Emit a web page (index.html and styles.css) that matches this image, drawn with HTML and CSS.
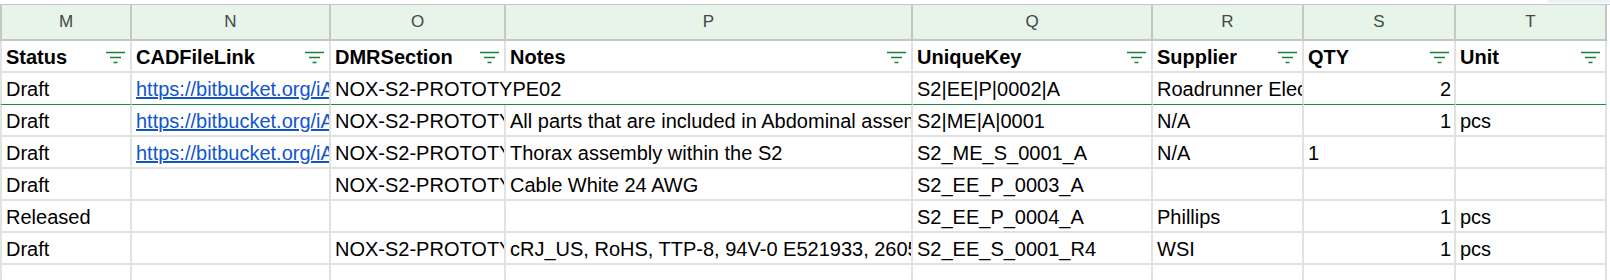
FILE: index.html
```html
<!DOCTYPE html>
<html lang="en">
<head>
<meta charset="utf-8">
<title>Sheet</title>
<link rel="stylesheet" href="styles.css">
</head>
<body>
<div class="sheet">
  <div class="topbar"><div class="pill"></div></div>
  <div class="grid">
    <div class="ch first">M</div>
    <div class="ch">N</div>
    <div class="ch">O</div>
    <div class="ch">P</div>
    <div class="ch">Q</div>
    <div class="ch">R</div>
    <div class="ch">S</div>
    <div class="ch">T</div>
    <div class="edge"></div>

    <div class="c hd first"><span>Status</span><svg class="flt" width="19" height="13" viewBox="0 0 19 13"><path d="M0 1.5h19M4 6.5h11M7.5 11.5h4"/></svg></div>
    <div class="c hd"><span>CADFileLink</span><svg class="flt" width="19" height="13" viewBox="0 0 19 13"><path d="M0 1.5h19M4 6.5h11M7.5 11.5h4"/></svg></div>
    <div class="c hd"><span>DMRSection</span><svg class="flt" width="19" height="13" viewBox="0 0 19 13"><path d="M0 1.5h19M4 6.5h11M7.5 11.5h4"/></svg></div>
    <div class="c hd"><span>Notes</span><svg class="flt" width="19" height="13" viewBox="0 0 19 13"><path d="M0 1.5h19M4 6.5h11M7.5 11.5h4"/></svg></div>
    <div class="c hd"><span>UniqueKey</span><svg class="flt" width="19" height="13" viewBox="0 0 19 13"><path d="M0 1.5h19M4 6.5h11M7.5 11.5h4"/></svg></div>
    <div class="c hd"><span>Supplier</span><svg class="flt" width="19" height="13" viewBox="0 0 19 13"><path d="M0 1.5h19M4 6.5h11M7.5 11.5h4"/></svg></div>
    <div class="c hd"><span>QTY</span><svg class="flt" width="19" height="13" viewBox="0 0 19 13"><path d="M0 1.5h19M4 6.5h11M7.5 11.5h4"/></svg></div>
    <div class="c hd"><span>Unit</span><svg class="flt" width="19" height="13" viewBox="0 0 19 13"><path d="M0 1.5h19M4 6.5h11M7.5 11.5h4"/></svg></div>
    <div class="edge"></div>

    <div class="c gl first">Draft</div>
    <div class="c gl"><a class="lnk" href="#">https://bitbucket.org/iA/</a></div>
    <div class="c gl span2">NOX-S2-PROTOTYPE02</div>
    <div class="c gl">S2|EE|P|0002|A</div>
    <div class="c gl">Roadrunner Electronics</div>
    <div class="c gl num">2</div>
    <div class="c gl"></div>
    <div class="edge"></div>

    <div class="c first">Draft</div>
    <div class="c"><a class="lnk" href="#">https://bitbucket.org/iA/</a></div>
    <div class="c">NOX-S2-PROTOTYPE02</div>
    <div class="c">All parts that are included in Abdominal assembly</div>
    <div class="c">S2|ME|A|0001</div>
    <div class="c">N/A</div>
    <div class="c num">1</div>
    <div class="c">pcs</div>
    <div class="edge"></div>

    <div class="c first">Draft</div>
    <div class="c"><a class="lnk" href="#">https://bitbucket.org/iA/</a></div>
    <div class="c">NOX-S2-PROTOTYPE02</div>
    <div class="c">Thorax assembly within the S2</div>
    <div class="c">S2_ME_S_0001_A</div>
    <div class="c">N/A</div>
    <div class="c">1</div>
    <div class="c"></div>
    <div class="edge"></div>

    <div class="c first">Draft</div>
    <div class="c"></div>
    <div class="c">NOX-S2-PROTOTYPE02</div>
    <div class="c">Cable White 24 AWG</div>
    <div class="c">S2_EE_P_0003_A</div>
    <div class="c"></div>
    <div class="c"></div>
    <div class="c"></div>
    <div class="edge"></div>

    <div class="c first">Released</div>
    <div class="c"></div>
    <div class="c"></div>
    <div class="c"></div>
    <div class="c">S2_EE_P_0004_A</div>
    <div class="c">Phillips</div>
    <div class="c num">1</div>
    <div class="c">pcs</div>
    <div class="edge"></div>

    <div class="c first">Draft</div>
    <div class="c"></div>
    <div class="c">NOX-S2-PROTOTYPE02</div>
    <div class="c">cRJ_US, RoHS, TTP-8, 94V-0 E521933, 2605</div>
    <div class="c">S2_EE_S_0001_R4</div>
    <div class="c">WSI</div>
    <div class="c num">1</div>
    <div class="c">pcs</div>
    <div class="edge"></div>

    <div class="c first last"></div>
    <div class="c last"></div>
    <div class="c last"></div>
    <div class="c last"></div>
    <div class="c last"></div>
    <div class="c last"></div>
    <div class="c last"></div>
    <div class="c last"></div>
    <div class="edge"></div>
  </div>
</div>
</body>
</html>
```

FILE: styles.css
```css
* { box-sizing: border-box; }

html, body {
  margin: 0;
  padding: 0;
  background: #ffffff;
}

body {
  width: 1610px;
  height: 280px;
  overflow: hidden;
  font-family: "Liberation Sans", Arial, sans-serif;
  color: #000000;
}

.sheet {
  display: flex;
  flex-direction: column;
}

.topbar {
  height: 4px;
  display: flex;
  justify-content: flex-end;
}

.pill {
  width: 63px;
  height: 3px;
  background: #eef1f5;
  border-bottom-left-radius: 6px;
}

.grid {
  display: grid;
  grid-template-columns: 132px 199px 175px 407px 240px 151px 152px 151px 1fr;
  grid-template-rows: 36px repeat(7, 32px) 15px;
  border-top: 1px solid #c4c7c5;
}

.ch {
  background: #e6f4ea;
  border-right: 2px solid #c4c7c5;
  border-bottom: 2px solid #c4c7c5;
  font-size: 17px;
  line-height: 34px;
  text-align: center;
  color: #444746;
}

.ch.first {
  border-left: 2px solid #c4c7c5;
}

.edge {
  background: #ffffff;
}

.c {
  display: flex;
  align-items: flex-end;
  min-width: 0;
  overflow: hidden;
  white-space: nowrap;
  padding: 0 4px 2px 4px;
  font-size: 20px;
  line-height: 23px;
  border-right: 2px solid #e1e1e1;
  border-bottom: 2px solid #e1e1e1;
  background: #ffffff;
}

.c.first {
  border-left: 2px solid #e1e1e1;
}

.c.hd {
  justify-content: space-between;
  font-weight: bold;
}

.c.hd span {
  overflow: hidden;
}

.flt {
  flex: none;
  margin: 0 1px 5px 6px;
  align-self: flex-end;
}

.flt path {
  stroke: #188038;
  stroke-width: 1.6;
  fill: none;
}

.c.gl {
  border-bottom: 1px solid #1e8e3e;
  padding-bottom: 3px;
}

.span2 {
  grid-column: span 2;
}

.num {
  justify-content: flex-end;
  padding-right: 3px;
}

.lnk {
  color: #1155cc;
  text-decoration: underline;
}

.c.last {
  border-bottom: none;
}
```
